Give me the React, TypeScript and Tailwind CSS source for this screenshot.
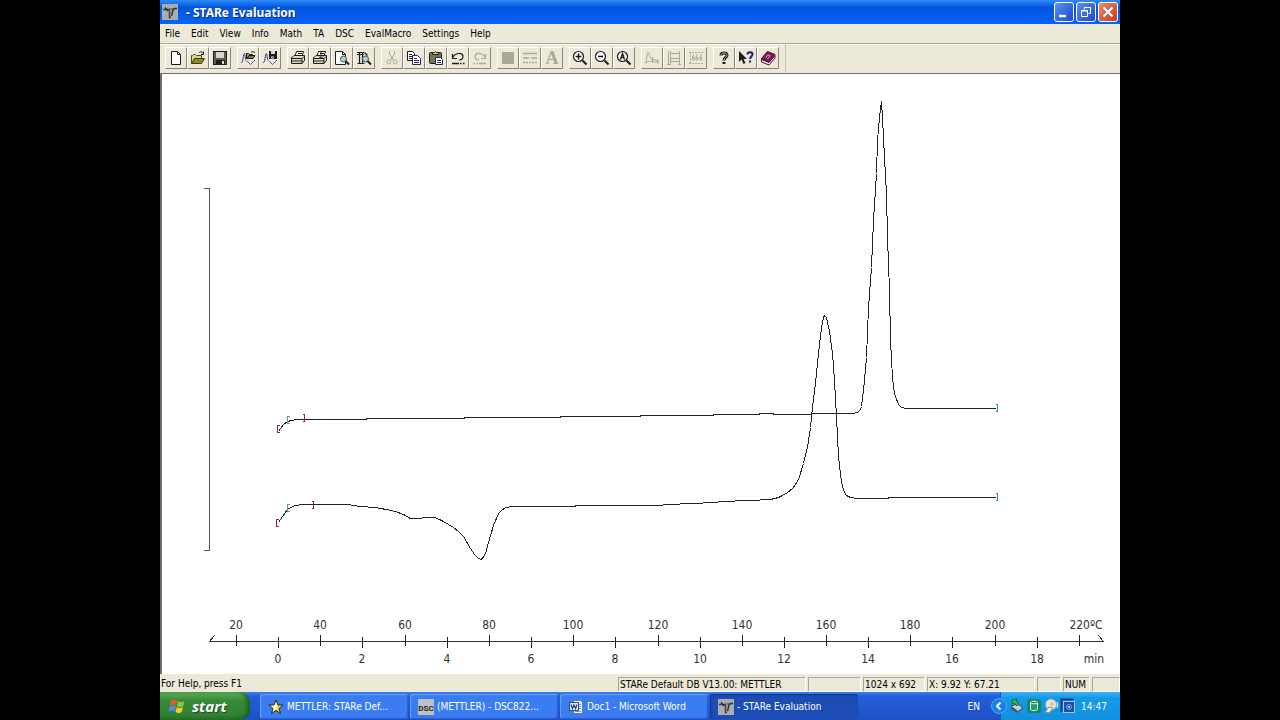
import { useState, type ReactNode } from "react";
import clsx from "clsx";

interface Tool {
  label: string;
  icon: ReactNode;
  disabled?: boolean;
}

interface Marker {
  x: number;
  y: number;
  side: "open" | "close";
  color: string;
}

const INK = "#1c1c1c";
const FADED = "#aca899";

const MENUS = [
  "File",
  "Edit",
  "View",
  "Info",
  "Math",
  "TA",
  "DSC",
  "EvalMacro",
  "Settings",
  "Help",
];

// Chart coordinates, origin at the top left of the plot area
const UPPER_CURVE =
  "118,357 120,354 123,350 127,347 131,346 136,345 206,345 206,344 304,344 304,343 400,343 400,342 480,342 480,341 553,341 553,340 596,340 602,339 610,339 616,340 651,340 651,339 692,339 697,338 700,335 701,332 703,316 706,283 708,233 711,193 713,146 716,99 717,66 719,43 721,27 722,43 724,83 726,119 727,163 729,216 730,266 732,303 734,319 738,330 741,333 746,334 835,334";

const LOWER_CURVE =
  "118,448 122,442 127,435 130,433 135,431 142,430 187,430 193,431 200,432 214,433 226,435 235,437 243,440 250,444 257,444 266,443 274,443 279,445 283,447 288,450 293,453 298,457 303,462 306,467 310,474 314,480 317,483 320,485 322,484 325,479 328,468 333,451 338,439 341,436 345,433 352,432 415,432 415,431 496,431 510,430 530,429 555,428 560,427 590,426 610,425 618,423 622,421 627,418 632,414 635,410 638,405 643,389 647,373 650,353 652,333 655,309 658,279 661,253 663,243 664,241 666,243 669,257 672,279 674,306 676,342 678,382 681,408 684,418 686,421 690,423 697,424 728,424 728,423 835,423";

const MARKERS: Marker[] = [
  { x: 116, y: 351, side: "open", color: "#9b2335" },
  { x: 126, y: 342, side: "open", color: "#5f9ea0" },
  { x: 144, y: 340, side: "close", color: "#9b2335" },
  { x: 115, y: 445, side: "open", color: "#9b2335" },
  { x: 126, y: 430, side: "open", color: "#5f9ea0" },
  { x: 153, y: 427, side: "close", color: "#9b2335" },
  { x: 837, y: 330, side: "close", color: "#2f8f8f" },
  { x: 837, y: 419, side: "close", color: "#2f8f8f" },
];

const TEMPERATURES = [20, 40, 60, 80, 100, 120, 140, 160, 180, 200];
const MINUTES = [0, 2, 4, 6, 8, 10, 12, 14, 16, 18];
const TICK_STEP = 84.3;

function Icon({ children }: { children: ReactNode }) {
  return (
    <svg viewBox="0 0 16 16" className="size-4 shrink-0" fill="none" aria-hidden="true">
      {children}
    </svg>
  );
}

function AppIcon() {
  return (
    <Icon>
      <rect width="16" height="16" fill="#a9adb0" />
      <path d="M1 5.500h5.500c.8 0 1 .5 1 1.500v6.500h1.500" stroke="#3c3c3c" strokeWidth="1.500" />
      <path d="M3 3.500L6 7M9.500 12c1-2 .5-7 3-7.500H15" stroke="#2b2b2b" strokeWidth="1.400" />
      <path d="M7 5h6" stroke="#4a4a4a" />
    </Icon>
  );
}

function Printer({ preview }: { preview?: boolean }) {
  return (
    <Icon>
      <path d="M5 6l1.500-4.500h7L12 6z" fill="#fff" stroke={INK} />
      <path d="M2 7.500l2-2h10.500v5l-2.500 3H1.500v-6z" fill="#dedacb" stroke={INK} />
      <path d="M2 8.500h10l2-2M2 11h10M12 8.500v5" stroke={INK} />
      <path d="M8 3.500h4" stroke={INK} />
      <path d="M8 12.300h3" stroke="#e5d44a" />
      {preview && <path d="M9 2v6M7 6.500L9 8.500l2-2" stroke={INK} />}
    </Icon>
  );
}

function PagePreview({ dark }: { dark?: boolean }) {
  return (
    <Icon>
      {dark ? (
        <path
          d="M1 2.500h7M1 4.500h7M3.500 2.500v11M6.500 2.500v11M1.500 13.500h7M8.500 2.500l3 3"
          stroke={INK}
          strokeWidth="1.200"
        />
      ) : (
        <>
          <path d="M1.500 1.500h7l3 3v10h-10z" fill="#fff" stroke={INK} />
          <path d="M8.500 1.500v3h3" stroke={INK} />
        </>
      )}
      <circle cx="9.500" cy="9" r="3" fill="#a9d3ce" stroke="#3f5a58" />
      <path d="M11.500 11l3.500 3.500" stroke={INK} strokeWidth="2" />
    </Icon>
  );
}

function CurveFile({ save }: { save?: boolean }) {
  return (
    <Icon>
      <path d="M1 12.500c1.500 0 1.500-1 2-4s1-5 1.500-5 .5 4 1.500 7" stroke="#33338f" />
      {save ? (
        <>
          <rect x="7" y="1" width="8" height="8" fill={INK} />
          <rect x="9" y="1" width="4" height="3" fill="#d8d8d8" />
          <rect x="9" y="6" width="3" height="3" fill="#8b8b8b" />
        </>
      ) : (
        <>
          <path d="M6.500 8.500v-5h2l1 1h3v4z" fill="#8f9a58" stroke={INK} />
          <path d="M7 8.500l2-3h6l-2 3z" fill="#6f7d48" stroke={INK} />
          <path d="M11 2.500c1-1 2-1 4 0" stroke={INK} />
        </>
      )}
      <path d="M7 11l3.500 3.500L15 10" stroke="#5555a8" />
    </Icon>
  );
}

function Magnifier({ children }: { children: ReactNode }) {
  return (
    <Icon>
      <circle cx="6.500" cy="6.500" r="5" fill="#fff" stroke={INK} strokeWidth="1.200" />
      <path d="M10.500 10.500l4 4" stroke={INK} strokeWidth="2" />
      {children}
    </Icon>
  );
}

const TOOL_GROUPS: Tool[][] = [
  [
    {
      label: "New",
      icon: (
        <Icon>
          <path d="M3.500 1.500h6l3 3v10h-9z" fill="#fff" stroke={INK} />
          <path d="M9.500 1.500v3h3" stroke={INK} />
        </Icon>
      ),
    },
    {
      label: "Open",
      icon: (
        <Icon>
          <path d="M1.500 13.500v-8h1l1-1h2l1 1h5v3" fill="#d9d78c" stroke="#4b4a10" />
          <path d="M1.500 13.500l3-5h10l-3 5z" fill="#8c8b28" stroke="#3b3a10" />
          <path d="M9 3c1.500-2 3.500-1 4.500 1M13.500 1.500V4.500H11" stroke={INK} />
        </Icon>
      ),
    },
    {
      label: "Save",
      icon: (
        <Icon>
          <rect x="1.500" y="1.500" width="13" height="13" fill="#5c5c4e" stroke={INK} />
          <rect x="4" y="2" width="8" height="6" fill="#d5d5d0" />
          <rect x="4" y="10" width="9" height="5" fill={INK} />
          <rect x="10" y="11" width="2" height="3" fill="#ddd" />
        </Icon>
      ),
    },
  ],
  [
    { label: "Open curve", icon: <CurveFile /> },
    { label: "Save curve", icon: <CurveFile save /> },
  ],
  [
    { label: "Print", icon: <Printer /> },
    { label: "Print selection", icon: <Printer preview /> },
    { label: "Print preview", icon: <PagePreview /> },
    { label: "Preview text", icon: <PagePreview dark /> },
  ],
  [
    {
      label: "Cut",
      disabled: true,
      icon: (
        <Icon>
          <path d="M5.500 1v3l4 6M10.500 1v3l-4 6" stroke={FADED} />
          <circle cx="5" cy="12" r="2" stroke={FADED} />
          <circle cx="11" cy="12" r="2" stroke={FADED} />
        </Icon>
      ),
    },
    {
      label: "Copy",
      icon: (
        <Icon>
          <path d="M1.500 1.500h5l2 2v7h-7z" fill="#fff" stroke={INK} />
          <path d="M3 4.500h3M3 6.500h4M3 8.500h4" stroke={INK} />
          <path d="M6.500 5.500h5l3 3v6h-8z" fill="#fff" stroke="#25256f" />
          <path d="M8 8.500h3M8 10.500h5M8 12.500h5" stroke="#25256f" />
        </Icon>
      ),
    },
    {
      label: "Paste",
      icon: (
        <Icon>
          <rect x="1.500" y="2.500" width="12" height="11" rx="1" fill="#77745a" stroke={INK} />
          <path d="M4.500 4.500v-2h2l1-1 1 1h2v2z" fill="#d9d58c" stroke={INK} />
          <path d="M7.500 7.500h5l2 2v5h-7z" fill="#fff" stroke="#25256f" />
          <path d="M9 10.500h4M9 12.500h4" stroke="#25256f" />
        </Icon>
      ),
    },
    {
      label: "Undo",
      icon: (
        <Icon>
          <path d="M3 7c2-4 9-5 10-1 0 2-1 4-4 4" stroke={INK} strokeWidth="1.200" />
          <path d="M2.500 4v4.500H7" stroke={INK} strokeWidth="1.200" />
          <path d="M2 13.500h7M10 13.500h1.500M13 13.500h1.500" stroke={INK} strokeWidth="1.400" />
        </Icon>
      ),
    },
    {
      label: "Redo",
      disabled: true,
      icon: (
        <Icon>
          <path d="M13 7C11 3 4 2 3 6c0 2 1 4 4 4" stroke={FADED} strokeWidth="1.200" />
          <path d="M13.500 4v4.500H9" stroke={FADED} strokeWidth="1.200" />
          <path d="M14 13.500H7M6 13.500H4.500M3 13.500H1.500" stroke={FADED} strokeWidth="1.400" />
        </Icon>
      ),
    },
  ],
  [
    {
      label: "Fill colour",
      disabled: true,
      icon: (
        <Icon>
          <rect x="2" y="2" width="12" height="12" fill={FADED} />
        </Icon>
      ),
    },
    {
      label: "Line style",
      disabled: true,
      icon: (
        <Icon>
          <path d="M1 3.500h14" stroke={FADED} strokeWidth="1.500" />
          <path d="M1 8h6M9 8h6" stroke={FADED} strokeWidth="1.500" />
          <path d="M1 12.500h14" stroke={FADED} strokeWidth="1.500" strokeDasharray="2 1" />
        </Icon>
      ),
    },
    {
      label: "Font",
      disabled: true,
      icon: (
        <span className="font-['Liberation_Serif',serif] text-[18px] leading-4 font-bold text-[#aca899]">
          A
        </span>
      ),
    },
  ],
  [
    {
      label: "Zoom in",
      icon: (
        <Magnifier>
          <path d="M3.500 6.500h6M6.500 3.500v6" stroke={INK} strokeWidth="1.600" />
        </Magnifier>
      ),
    },
    {
      label: "Zoom out",
      icon: (
        <Magnifier>
          <path d="M4 6.500h5" stroke={INK} strokeWidth="1.600" />
        </Magnifier>
      ),
    },
    {
      label: "Auto zoom",
      icon: (
        <Magnifier>
          <path d="M4.500 9.500l2-6 2 6M5 7.500h3" stroke={INK} strokeWidth="1.400" />
        </Magnifier>
      ),
    },
  ],
  [
    {
      label: "Peak",
      disabled: true,
      icon: (
        <Icon>
          <path d="M1 13.500c2-1 1.500-10 3-11 1.500 1 1.500 5 3.500 6.500l7.500 2M2 12.500l5-1.500 8 2M8.500 7v6M13.500 9v4" stroke={FADED} />
        </Icon>
      ),
    },
    {
      label: "Table",
      disabled: true,
      icon: (
        <Icon>
          <path d="M2.500 1v14M4.500 1v14M13.500 1v14M1 14.500h3M12 14.500h3M4.500 3.500h9M4.500 8.500h9M4.500 11.500h9" stroke={FADED} />
        </Icon>
      ),
    },
    {
      label: "Grid",
      disabled: true,
      icon: (
        <Icon>
          <path d="M1 2.500h14M1 13.500h14M2.500 2v12" stroke={FADED} strokeDasharray="2 1" />
          <path d="M6 4L4.500 7v3h2V7.500h-2M9.500 4L8 7v3h2V7.500H8M13.500 4L12 7v3h2V7.500h-2" stroke={FADED} />
        </Icon>
      ),
    },
  ],
  [
    {
      label: "About",
      icon: (
        <Icon>
          <path
            d="M5 5.500C5 2 11 2 11 5.500 11 7.500 8 7.500 8 10.500M8 12v2"
            stroke={INK}
            strokeWidth="3"
          />
          <path d="M5 5.500C5 2 11 2 11 5.500 11 7.500 8 7.500 8 10" stroke="#b5b18c" />
        </Icon>
      ),
    },
    {
      label: "Context help",
      icon: (
        <Icon>
          <path d="M1 1v11l2.500-2.500L5.500 14l2-1-2-4H9z" fill={INK} />
          <path
            d="M9.500 4.500c0-3 5-3 5 0 0 2-2.500 2-2.500 4.500M12 10.500v2"
            stroke="#1f1f78"
            strokeWidth="2"
          />
        </Icon>
      ),
    },
    {
      label: "Handbook",
      icon: (
        <Icon>
          <path d="M1 9l6.500-7.500L15 4.500 9 12z" fill="#7b1a4c" stroke="#4a0d30" />
          <path d="M1.500 9.500L9 12.500l6-7v2.500l-6 7-7.500-3z" fill="#efe9ec" stroke="#4a0d30" />
          <path d="M6 7.500c1-3 4-3 4-1.500S8 7 7.500 9" stroke="#e3a8c6" />
        </Icon>
      ),
    },
  ],
];

function TitleBar() {
  return (
    <header className="flex h-6 shrink-0 items-center gap-2 bg-linear-to-b from-[#2f8bf7] via-[#0453dd] via-30% to-[#0463f8] px-0.5 text-white">
      <AppIcon />
      <h1 className="flex-1 pt-0.5 font-['Noto_Sans',sans-serif] text-[12px] font-bold [text-shadow:1px_1px_0_#0a2a80]">
        - STARe Evaluation
      </h1>
      <div className="flex gap-0.5">
        <button
          aria-label="Minimize"
          className="flex size-5 items-center justify-center rounded-[3px] border border-white bg-linear-to-br from-[#5c8ff5] to-[#1e48c8]"
        >
          <Icon>
            <path d="M3 12h7" stroke="#fff" strokeWidth="2.500" />
          </Icon>
        </button>
        <button
          aria-label="Restore"
          className="flex size-5 items-center justify-center rounded-[3px] border border-white bg-linear-to-br from-[#5c8ff5] to-[#1e48c8]"
        >
          <Icon>
            <path d="M6.500 5.500v-2h6v6h-2M6 3.500h7" stroke="#fff" />
            <path d="M3.500 6.500h6v6h-6zM3 7h7" stroke="#fff" />
          </Icon>
        </button>
        <button
          aria-label="Close"
          className="flex size-5 items-center justify-center rounded-[3px] border border-white bg-linear-to-br from-[#ee8a6c] to-[#c2371a]"
        >
          <Icon>
            <path d="M3.500 3.500l9 9M12.500 3.500l-9 9" stroke="#fff" strokeWidth="2" />
          </Icon>
        </button>
      </div>
    </header>
  );
}

function ToolBar() {
  return (
    <div
      role="toolbar"
      className="flex h-[30px] shrink-0 items-center gap-1.5 border-t border-[#aca899] bg-[#ece9d8] pb-px pl-[5px] shadow-[inset_0_1px_0_#fff]"
    >
      {TOOL_GROUPS.map((group, index) => (
        <div key={index} className="flex">
          {group.map((tool) => (
            <button
              key={tool.label}
              aria-label={tool.label}
              disabled={tool.disabled}
              className="flex size-[22px] items-center justify-center border border-t-white border-r-[#8a8779] border-b-[#8a8779] border-l-white"
            >
              {tool.icon}
            </button>
          ))}
        </div>
      ))}
      <div className="h-full border-l border-[#c5c2b2]" />
    </div>
  );
}

function Chart() {
  return (
    <main className="min-h-0 flex-1 border-t border-l-2 border-[#716f64] bg-white">
      <svg
        viewBox="2 0 958 600"
        className="size-full font-['DejaVu_Sans_Condensed','DejaVu_Sans',sans-serif] text-[12px]"
        role="img"
        aria-label="DSC curves over temperature and time"
      >
        <g
          transform="translate(0.5 0.5)"
          fill="none"
          stroke="#222"
          shapeRendering="crispEdges"
        >
          <path d="M43 114h6v362h-6" stroke="#555" />
          <path d="M54 561l-5 6h894l-5 -6" stroke="#333" />
          {TEMPERATURES.map((value, index) => (
            <path key={value} d={`M${Math.round(76 + index * TICK_STEP)} 560v11`} />
          ))}
          {MINUTES.map((value, index) => (
            <path key={value} d={`M${Math.round(118 + index * TICK_STEP)} 562v11`} />
          ))}
          <path d={`M${Math.round(76 + 10 * TICK_STEP)} 560v11`} />
          <polyline points={UPPER_CURVE} />
          <polyline points={LOWER_CURVE} />
          {MARKERS.map((marker) => (
            <path
              key={`${marker.x}-${marker.y}`}
              d={
                marker.side === "open"
                  ? `M${marker.x + 3} ${marker.y}h-2v7h2`
                  : `M${marker.x - 2} ${marker.y}h2v7h-2`
              }
              stroke={marker.color}
            />
          ))}
        </g>
        <g fill="#333" textAnchor="middle">
          {TEMPERATURES.map((value, index) => (
            <text key={value} x={Math.round(76 + index * TICK_STEP)} y="555">
              {value}
            </text>
          ))}
          {MINUTES.map((value, index) => (
            <text key={value} x={Math.round(118 + index * TICK_STEP)} y="589">
              {value}
            </text>
          ))}
          <text x="926" y="555">
            220ºC
          </text>
          <text x="934" y="589">
            min
          </text>
        </g>
      </svg>
    </main>
  );
}

function StatusPane({ className, children }: { className: string; children?: ReactNode }) {
  return (
    <div
      className={clsx(
        "h-[14px] shrink-0 truncate border-t border-l border-[#aca899] pl-px leading-[14px] shadow-[1px_1px_0_#fff]",
        className
      )}
    >
      {children}
    </div>
  );
}

function StatusBar() {
  return (
    <footer className="flex h-[18px] shrink-0 items-center gap-[3px] bg-[#ece9d8] px-px pt-px">
      <p className="flex-1 truncate">For Help, press F1</p>
      <StatusPane className="w-[187px]">STARe Default DB V13.00: METTLER</StatusPane>
      <StatusPane className="w-[52px]" />
      <StatusPane className="w-[61px]">1024 x 692</StatusPane>
      <StatusPane className="w-[107px]">X: 9.92 Y: 67.21</StatusPane>
      <StatusPane className="w-[23px]" />
      <StatusPane className="w-[26px]">NUM</StatusPane>
      <StatusPane className="w-[27px]" />
    </footer>
  );
}

const TASKS = [
  {
    title: "METTLER: STARe Def...",
    icon: (
      <Icon>
        <path
          d="M8 1l2 5h5l-4 3.500 1.500 5L8 11.500 3.500 14.500 5 9.500 1 6h5z"
          fill="#f3d548"
          stroke="#2c2a18"
        />
        <path d="M8 2.500L9 7 8 10 5 12.500 6 9 3 7l4-.5z" fill="#fff" />
      </Icon>
    ),
  },
  {
    title: "(METTLER) - DSC822...",
    icon: (
      <Icon>
        <rect width="16" height="16" fill="#bfc0c4" />
        <text
          x="8"
          y="12"
          textAnchor="middle"
          className="font-['Liberation_Sans_Narrow','Roboto',sans-serif] text-[8px] font-bold"
          fill="#222"
        >
          DSC
        </text>
      </Icon>
    ),
  },
  {
    title: "Doc1 - Microsoft Word",
    icon: (
      <Icon>
        <path d="M5.500 1.500h7l2 2v11h-9z" fill="#eef3fc" stroke="#5a7bb8" />
        <path d="M11 5.500h2M11 7.500h2M11 9.500h2M7 12.500h6" stroke="#7a94c4" />
        <rect x="1.500" y="3.500" width="9" height="8" fill="#e8effa" stroke="#2b4e93" />
        <path d="M3 5.500l1.500 4L6 6l1.500 3.500L9 5.500" stroke="#23488f" strokeWidth="1.300" />
      </Icon>
    ),
  },
  { title: "- STARe Evaluation", icon: <AppIcon /> },
];

function TaskBar() {
  const [active, setActive] = useState(3);

  return (
    <nav className="flex h-7 shrink-0 bg-linear-to-b from-[#3a80f0] via-[#245edb] via-15% to-[#1f4fc4] text-white">
      <button className="flex w-[90px] shrink-0 items-center gap-1.5 rounded-r-[10px] bg-linear-to-b from-[#5db25a] via-[#388a38] via-30% to-[#2f7f31] pl-2 font-['Open_Sans',sans-serif] text-[15px] font-bold italic shadow-[inset_-3px_-1px_4px_#1d5c20] [text-shadow:1px_1px_1px_#1b4a1c]">
        <svg viewBox="0 0 18 18" className="size-[18px]" aria-hidden="true">
          <path d="M3 3.500c2-1.500 4-1.500 6 0L8 8.500c-2-1.500-4-1.500-6 0z" fill="#e8562a" />
          <path d="M10 4c2 1.500 4 1.500 6.500 0l-1.200 5c-2 1.500-4 1.500-6.300 0z" fill="#8cc63f" />
          <path d="M1.800 9.500c2-1.500 4-1.500 6 0l-1.200 5c-2-1.500-4-1.500-6 0z" fill="#4a90e8" />
          <path d="M8.800 10c2 1.500 4 1.500 6.200 0l-1.200 5c-2 1.500-4 1.500-6.200 0z" fill="#f7c928" />
        </svg>
        start
      </button>
      <div className="flex min-w-0 flex-1 gap-0.5 pt-0.5 pb-px pl-2.5">
        {TASKS.map((task, index) => (
          <button
            key={task.title}
            onClick={() => setActive(index)}
            className={clsx(
              "flex w-[148px] min-w-0 items-center gap-[3px] rounded-[3px] pl-2",
              index === active
                ? "bg-[#1c4cb4] shadow-[inset_1px_1px_2px_#12348a]"
                : "bg-[#3a7cf2] shadow-[inset_1px_1px_1px_#6aa2f8,inset_-1px_-1px_1px_#2a5fd0]"
            )}
          >
            {task.icon}
            <span className="truncate">{task.title}</span>
          </button>
        ))}
      </div>
      <span className="self-center pr-5">EN</span>
      <div className="relative flex w-[120px] shrink-0 items-center gap-px border-l border-[#0d5fb8] bg-linear-to-b from-[#3fb0f5] via-[#149ae8] via-20% to-[#1290e0] pl-2">
        <button aria-label="Show hidden icons" className="absolute -left-2.5 size-4">
          <svg viewBox="0 0 16 16" className="size-4" fill="none">
            <circle cx="8" cy="8" r="7.500" fill="#1c7fe8" stroke="#4da6f5" />
            <path d="M9.500 4.500L6 8l3.500 3.500" stroke="#fff" strokeWidth="2" />
          </svg>
        </button>
        <Icon>
          <path d="M2 8l7-2 5 4-6 4z" fill="#c9ced4" stroke="#3c4650" />
          <path d="M2 8l6 4v3l-6-4z" fill="#4a545e" />
          <path d="M3 2l5-1-1 2 3 3-2 2-3-3-2 1z" fill="#3cb54a" stroke="#14702a" />
        </Icon>
        <Icon>
          <rect x="1" y="1" width="14" height="14" rx="4" fill="#0f8a5c" />
          <path d="M4.500 4.500v7c0 1.500 7 1.500 7 0v-7" fill="#2d9c72" stroke="#e8f5ee" />
          <ellipse cx="8" cy="4.500" rx="3.500" ry="1.300" fill="#0f8a5c" stroke="#e8f5ee" />
        </Icon>
        <Icon>
          <circle cx="8" cy="6.500" r="5.500" fill="#dfe6ee" stroke="#98a8b8" />
          <circle cx="9" cy="6" r="2" fill="#f0c27a" />
          <path d="M2 14l4-5 4 1-4 5z" fill="#f6f1e2" stroke="#8a8a80" />
          <path d="M14 4c1 2 1 4 0 6" stroke="#fff" />
        </Icon>
        <Icon>
          <rect x="3.500" y="3.500" width="11" height="11" fill="#1e4fa8" stroke="#9cc4f4" />
          <path d="M1.500 14V1.500h12" stroke="#123a80" strokeWidth="2" />
          <circle cx="9" cy="9" r="2.500" stroke="#6fa5f0" />
          <circle cx="9" cy="9" r="1" fill="#cfe4ff" />
        </Icon>
        <time className="pl-1">14:47</time>
      </div>
    </nav>
  );
}

export default function App() {
  return (
    <div className="flex h-screen justify-center bg-black">
      <div className="flex w-3/4 flex-col bg-[#ece9d8] font-['DejaVu_Sans_Condensed','DejaVu_Sans',sans-serif] text-[10px] text-black">
        <TitleBar />
        <nav className="flex h-[19px] shrink-0 items-center gap-[11px] pl-[5px]">
          {MENUS.map((menu) => (
            <button key={menu}>{menu}</button>
          ))}
        </nav>
        <ToolBar />
        <Chart />
        <StatusBar />
        <TaskBar />
      </div>
    </div>
  );
}
